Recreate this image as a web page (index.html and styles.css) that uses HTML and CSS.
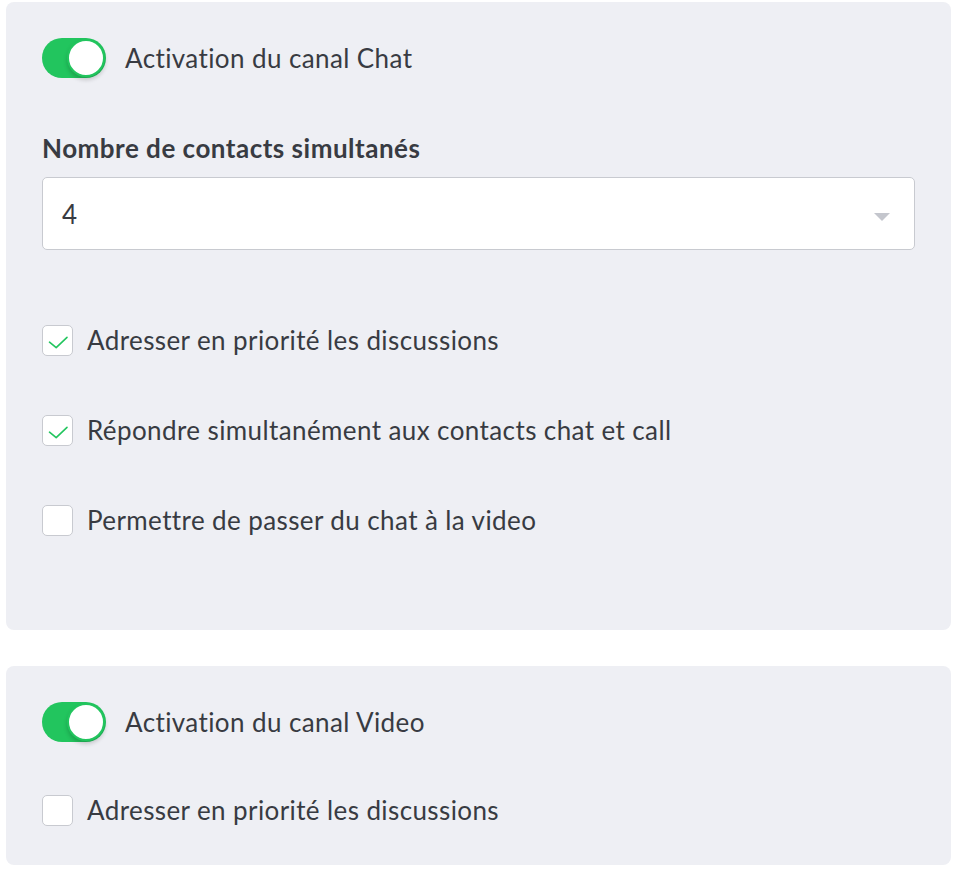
FILE: index.html
```html
<!DOCTYPE html>
<html lang="fr">
<head>
    <meta charset="UTF-8">
    <title>Canaux</title>
    <link rel="stylesheet" href="styles.css">
</head>
<body>
    <div class="card card-chat">
        <div class="toggle-row">
            <span class="toggle on"><span class="knob"></span></span>
            <span class="toggle-label">Activation du canal Chat</span>
        </div>

        <div class="field">
            <label class="field-label">Nombre de contacts simultanés</label>
            <div class="select">
                <span class="select-value">4</span>
                <span class="caret"></span>
            </div>
        </div>

        <div class="checks">
            <div class="check-row">
                <span class="checkbox checked">
                    <svg width="29" height="29" viewBox="0 0 29 29"><path d="M6.5 16.2 L13.2 21.6 L24 11.4" fill="none" stroke="#22c55e" stroke-width="1.6" stroke-linecap="round" stroke-linejoin="round"/></svg>
                </span>
                <span class="check-label">Adresser en priorité les discussions</span>
            </div>
            <div class="check-row">
                <span class="checkbox checked">
                    <svg width="29" height="29" viewBox="0 0 29 29"><path d="M6.5 16.2 L13.2 21.6 L24 11.4" fill="none" stroke="#22c55e" stroke-width="1.6" stroke-linecap="round" stroke-linejoin="round"/></svg>
                </span>
                <span class="check-label">Répondre simultanément aux contacts chat et call</span>
            </div>
            <div class="check-row">
                <span class="checkbox"></span>
                <span class="check-label">Permettre de passer du chat à la video</span>
            </div>
        </div>
    </div>

    <div class="card card-video">
        <div class="toggle-row">
            <span class="toggle on"><span class="knob"></span></span>
            <span class="toggle-label">Activation du canal Video</span>
        </div>
        <div class="check-row">
            <span class="checkbox"></span>
            <span class="check-label">Adresser en priorité les discussions</span>
        </div>
    </div>
</body>
</html>
```

FILE: styles.css
```css
body {
    margin: 0;
    padding: 2px 5px 0 6px;
    background-color: #ffffff;
    font-family: Lato, "Open Sans", sans-serif;
    color: #383b42;
    letter-spacing: 0.4px;
}

.card {
    background-color: #eeeff4;
    border-radius: 8px;
    padding: 36px;
}

.card-chat {
    padding-bottom: 36px;
    margin-bottom: 36px;
}

.card-video {
    padding-bottom: 39px;
}

.toggle-row {
    display: flex;
    align-items: center;
    gap: 19px;
    height: 40px;
}

.toggle {
    position: relative;
    width: 64px;
    height: 40px;
    border-radius: 20px;
    background-color: #22c55e;
    flex: 0 0 auto;
}

.toggle .knob {
    position: absolute;
    top: 1px;
    right: 1px;
    width: 34px;
    height: 34px;
    border-radius: 50%;
    background-color: #ffffff;
    border: 2px solid #22c55e;
    box-shadow: 0 3px 4px rgba(0, 0, 0, 0.18);
}

.toggle-label {
    font-size: 26px;
}

.field {
    margin-top: 55px;
}

.field-label {
    display: block;
    font-size: 26px;
    font-weight: 700;
    letter-spacing: 0.5px;
    line-height: 30px;
    margin-bottom: 14px;
}

.select {
    display: flex;
    align-items: center;
    justify-content: space-between;
    height: 71px;
    background-color: #ffffff;
    border: 1px solid #c8cad0;
    border-radius: 5px;
    padding: 0 24px 0 19px;
}

.select-value {
    font-size: 26px;
}

.caret {
    width: 0;
    height: 0;
    border-left: 8px solid transparent;
    border-right: 8px solid transparent;
    border-top: 8px solid #c4c6cd;
    margin-top: 6px;
}

.checks {
    margin-top: 74px;
    display: flex;
    flex-direction: column;
    gap: 58px;
    padding-bottom: 58px;
}

.check-row {
    display: flex;
    align-items: center;
    gap: 14px;
    height: 32px;
}

.card-video .check-row {
    margin-top: 52px;
}

.checkbox {
    width: 29px;
    height: 29px;
    border: 1px solid #c8cad0;
    border-radius: 5px;
    background-color: #ffffff;
    flex: 0 0 auto;
}

.checkbox svg {
    display: block;
}

.check-label {
    font-size: 26px;
}
```
